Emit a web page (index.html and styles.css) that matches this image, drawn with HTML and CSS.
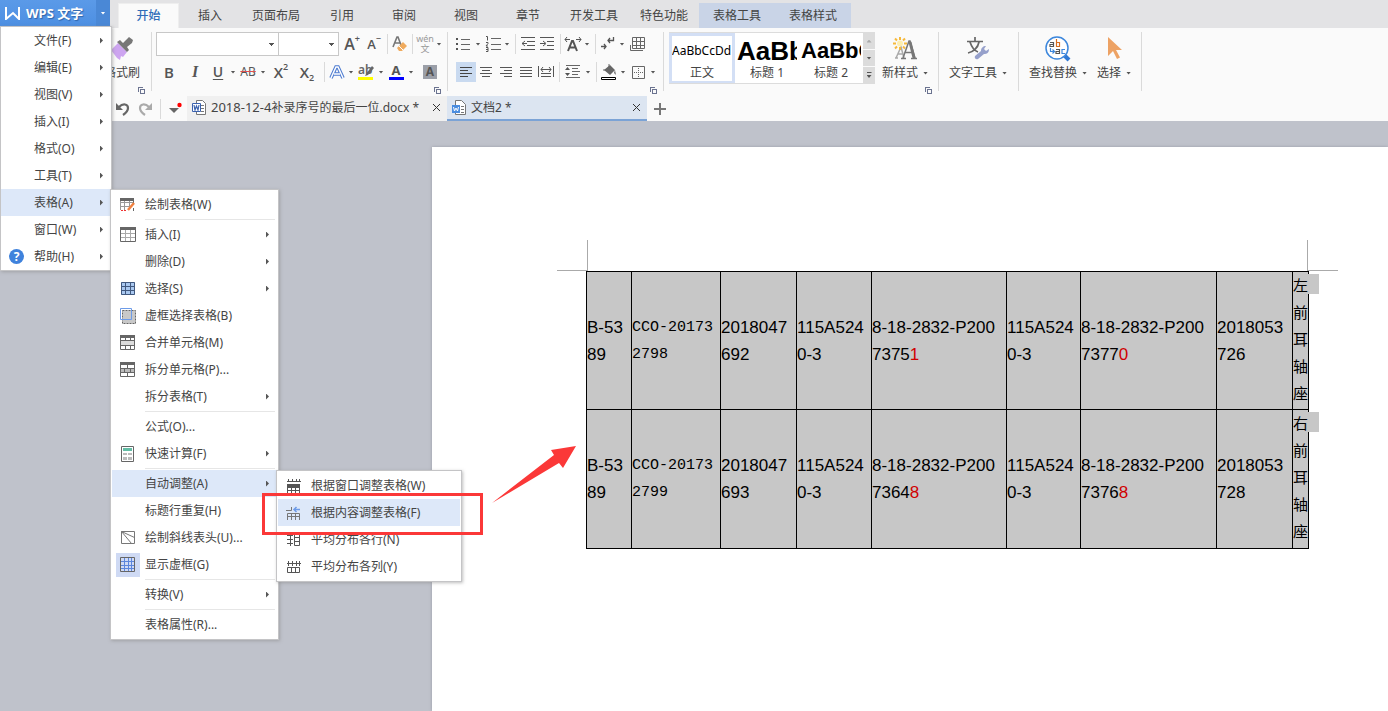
FILE: index.html
```html
<!DOCTYPE html>
<html lang="zh-CN">
<head>
<meta charset="utf-8">
<title>WPS 文字</title>
<link rel="stylesheet" href="styles.css">
</head>
<body>
<header class="titlebar">
  <div class="app">
    <button class="app-name"><svg width="16" height="14" viewBox="0 0 16 14"><path d="M1 1v12l7-6 6 6V1" fill="none" stroke="#fff" stroke-width="2"/></svg>WPS 文字</button>
    <button class="app-drop" aria-label="菜单"><i class="caret white"></i></button>
  </div>
  <nav class="tabs">
    <button class="tab active">开始</button>
    <button class="tab">插入</button>
    <button class="tab wide">页面布局</button>
    <button class="tab">引用</button>
    <button class="tab">审阅</button>
    <button class="tab">视图</button>
    <button class="tab">章节</button>
    <button class="tab wide">开发工具</button>
    <button class="tab wide">特色功能</button>
    <button class="tab context">表格工具</button>
    <button class="tab context">表格样式</button>
  </nav>
</header>

<section class="ribbon">
  <div class="group painter">
    <button class="big"><svg width="24" height="26" viewBox="0 0 24 26"><path d="M1 14l7-7 9 9-4 5-2-1-1 4-3-2z" fill="#cda5f0"/><path d="M7 6l3-2 3 3 6-6 4 3-1 3-5 4 2 3-2 2z" fill="#777"/></svg><span>格式刷</span></button>
    <i class="launcher"></i>
  </div>

  <div class="group font">
    <div class="row">
      <select class="font-name" aria-label="字体"><option></option></select>
      <select class="font-size" aria-label="字号"><option></option></select>
      <button class="tool w26 glyph">A<sup>+</sup></button>
      <button class="tool w18 glyph small">A<sup>−</sup></button>
      <i class="sep"></i>
      <button class="tool w16" aria-label="清除格式"><svg width="16" height="18" viewBox="0 0 16 18"><path d="M1 12L5 2h1l3 8M3 8h5" fill="none" stroke="#777" stroke-width="1.6"/><path d="M5 13l6-6 4 4-5 5H7z" fill="#f0ab5e"/><path d="M7 11l4 4" stroke="#fff"/></svg></button>
      <i class="sep"></i>
      <button class="tool w16 pinyin"><span>wén</span><span>文</span></button>
      <button class="tool w12" aria-label="更多"><i class="caret"></i></button>
    </div>
    <div class="row">
      <button class="tool w26 glyph mid">B</button>
      <button class="tool w26 glyph italic">I</button>
      <button class="tool w20 glyph under">U</button>
      <button class="tool w10" aria-label="下划线样式"><i class="caret"></i></button>
      <button class="tool w20 strike">AB</button>
      <button class="tool w10" aria-label="删除线样式"><i class="caret"></i></button>
      <button class="tool w26 glyph mid">X<sup>2</sup></button>
      <button class="tool w26 glyph mid">X<sub>2</sub></button>
      <i class="sep"></i>
      <button class="tool w16" aria-label="文字效果"><svg width="16" height="16" viewBox="0 0 16 16"><path d="M2 14L7 3h2l5 11M5 10h6" fill="none" stroke="#4d7bd0" stroke-width="3.600"/><path d="M2 14L7 3h2l5 11M5 10h6" fill="none" stroke="#fff" stroke-width="1.500"/></svg></button>
      <button class="tool w12" aria-label="更多效果"><i class="caret"></i></button>
      <button class="tool w18" aria-label="突出显示"><svg width="16" height="17" viewBox="0 0 16 17"><text x="0" y="10" font-size="12" class="ab">ab</text><path d="M8 10l6-8 2 2-6 7-3 1z" fill="#666"/><path d="M0 13h15v3H0z" fill="#ff0"/></svg></button>
      <button class="tool w12" aria-label="突出显示颜色"><i class="caret"></i></button>
      <button class="tool w18 mark">A</button>
      <button class="tool w12" aria-label="字体颜色"><i class="caret"></i></button>
      <button class="tool w26"><span class="shade">A</span></button>
    </div>
    <i class="launcher"></i>
  </div>

  <div class="group para">
    <div class="row">
      <button class="tool w18" aria-label="项目符号"><svg width="16" height="16" viewBox="0 0 16 16"><path d="M1 2h2v2H1zM1 7h2v2H1zM1 12h2v2H1z" fill="#555"/><path d="M6 3.500h9M6 8.500h9M6 13.500h9" stroke="#666"/></svg></button>
      <button class="tool w12" aria-label="更多符号"><i class="caret"></i></button>
      <button class="tool w18" aria-label="编号"><svg width="16" height="18" viewBox="0 0 16 18"><path d="M1 1.500h1.500v4M1 7.500h2v1l-2 2.500h2M1 12.500h2v4H1M1 14.500h2" fill="none" stroke="#555"/><path d="M6 3.500h10M6 9.500h10M6 14.500h10" stroke="#666"/></svg></button>
      <button class="tool w10" aria-label="更多编号"><i class="caret"></i></button>
      <i class="sep thin"></i>
      <button class="tool w18" aria-label="减少缩进"><svg width="14" height="14" viewBox="0 0 14 14"><path d="M0 .5h14M6 4.500h8M6 8.500h8M0 12.500h14M1 6.500h5M4 4L1 6.500 4 9" fill="none" stroke="#555"/></svg></button>
      <button class="tool w20" aria-label="增加缩进"><svg width="14" height="14" viewBox="0 0 14 14"><path d="M0 .5h14M7 4.500h7M7 8.500h7M0 12.500h14M0 6.500h5M3 4l3 2.500L3 9" fill="none" stroke="#555"/></svg></button>
      <i class="sep thin"></i>
      <button class="tool w18" aria-label="字符缩放"><svg width="18" height="16" viewBox="0 0 18 16"><path d="M4 15l4-10h1l4 10M6 11.500h6" fill="none" stroke="#555" stroke-width="2"/><path d="M1 3.500h5M3 1L1 3.500 3 6M12 3.500h5M15 1l2 2.500L15 6" fill="none" stroke="#555"/></svg></button>
      <button class="tool w10" aria-label="更多版式"><i class="caret"></i></button>
      <i class="sep thin"></i>
      <button class="tool w18" aria-label="换行"><svg width="14" height="14" viewBox="0 0 14 14"><path d="M12.500 0v3.500H7M9 1L7 3.500 9 6M0 9.500h5M3 7l2 2.500L3 12" fill="none" stroke="#555" stroke-width="1.300"/></svg></button>
      <button class="tool w10" aria-label="更多换行"><i class="caret"></i></button>
      <button class="tool w20" aria-label="插入表格"><svg width="15" height="15" viewBox="0 0 15 15"><path d="M2.500.5h12v11h-12zM2.500 4.500h12M2.500 8.500h12M6.500 0v12M10.500 0v12M.5 8v5.500H13" fill="none" stroke="#666"/></svg></button>
    </div>
    <div class="row second">
      <button class="tool w20 on" aria-label="左对齐"><svg width="12" height="12" viewBox="0 0 12 12"><path d="M0 1.500h12M0 4.500h8M0 7.500h12M0 10.500h8" stroke="#444"/></svg></button>
      <button class="tool w20" aria-label="居中"><svg width="12" height="12" viewBox="0 0 12 12"><path d="M0 1.500h12M2 4.500h8M0 7.500h12M2 10.500h8" stroke="#555"/></svg></button>
      <button class="tool w20" aria-label="右对齐"><svg width="12" height="12" viewBox="0 0 12 12"><path d="M0 1.500h12M4 4.500h8M0 7.500h12M4 10.500h8" stroke="#555"/></svg></button>
      <button class="tool w20" aria-label="两端对齐"><svg width="12" height="12" viewBox="0 0 12 12"><path d="M0 1.500h12M0 4.500h12M0 7.500h12M0 10.500h12" stroke="#555"/></svg></button>
      <button class="tool w20" aria-label="分散对齐"><svg width="16" height="14" viewBox="0 0 16 14"><path d="M.5 1v11M15.500 1v11M3 4.500h10M5 2L3 4.500 5 7M11 2l2 2.500L11 7M3 8.500h10M3 11.500h10" fill="none" stroke="#555"/></svg></button>
      <i class="sep thin"></i>
      <button class="tool w20" aria-label="行距"><svg width="16" height="14" viewBox="0 0 16 14"><path d="M1 .5h14M7 3.500h6M7 6.500h8M7 9.500h6M1 12.500h14" stroke="#666"/><path d="M0 5l2.500-3L5 5zM0 8h5l-2.500 3z" fill="#555"/></svg></button>
      <button class="tool w10" aria-label="更多行距"><i class="caret"></i></button>
      <i class="sep thin"></i>
      <button class="tool w18" aria-label="底纹颜色"><svg width="16" height="16" viewBox="0 0 16 16"><path d="M3 6l6-5 5 5-5 5zM14 6l1 5-2-2z" fill="#666"/><path d="M2 6h11M8 0v4" stroke="#666"/><path d="M.5 13.500h14v2H.5z" fill="#fff" stroke="#000"/></svg></button>
      <button class="tool w10" aria-label="更多底纹"><i class="caret"></i></button>
      <button class="tool w20" aria-label="边框"><svg width="13" height="13" viewBox="0 0 13 13"><path d="M.5.5h12v12H.5z" fill="none" stroke="#666"/><path d="M6.500 2v9M2 6.500h9" stroke="#666" stroke-dasharray="1 1"/></svg></button>
      <button class="tool w10" aria-label="更多边框"><i class="caret"></i></button>
    </div>
    <i class="launcher"></i>
  </div>

  <div class="group styles">
    <div class="gallery">
      <button class="style chosen"><span class="sample">AaBbCcDd</span><span>正文</span></button>
      <button class="style"><span class="sample h1">AaBb</span><span>标题 1</span></button>
      <button class="style"><span class="sample h2">AaBbC</span><span>标题 2</span></button>
      <div class="scroll">
        <button aria-label="上"><i class="caret up"></i></button>
        <button aria-label="下"><i class="caret"></i></button>
        <button aria-label="更多"><i class="caret bar"></i></button>
      </div>
    </div>
    <button class="big"><svg width="26" height="26" viewBox="0 0 26 26"><path d="M4 22l5-11 3 11M3 22h3M6 18h5" fill="none" stroke="#aaa" stroke-width="1.500"/><path d="M11 22l6-17h1l5 17M9 22.500h5M13 16.500h7M19 22.500h6" fill="none" stroke="#777" stroke-width="1.500"/><path d="M18 6l4 16" stroke="#777" stroke-width="3"/><g stroke="#f6b93b" stroke-width="2"><path d="M8 1v3M8 11v3M1 7.500h3M12 7.500h3M3 2.500l2 2M11 10.500l2 2M13 2.500l-2 2M5 10.500l-2 2"/></g><circle cx="8" cy="7.500" r="3" fill="#fdeeb0"/></svg><span>新样式<i class="caret"></i></span></button>
    <i class="launcher"></i>
  </div>

  <div class="group texttools">
    <button class="big"><svg width="24" height="26" viewBox="0 0 24 26"><path d="M1 5.500h16M9 1v4M4 6c2 6 5 9 8 10M13 6c-1 6-6 10-11 11" fill="none" stroke="#666" stroke-width="1.700"/><path d="M9 20l6-5c0-3 2-5 5-5l-2 3 2 2 3-2c0 4-2 5-5 5l-6 5c-2 1-4-1-3-3z" fill="#96a0cb"/></svg><span>文字工具<i class="caret"></i></span></button>
  </div>

  <div class="group find">
    <button class="big"><svg width="26" height="26" viewBox="0 0 26 26"><circle cx="12" cy="12" r="11" fill="#fff" stroke="#3d87dc" stroke-width="1.500"/><path d="M20 20l4 4" stroke="#3079d4" stroke-width="4"/><g fill="none" stroke-width="1.200"><path d="M5 6.500h3.500v4H5v-2h3" stroke="#555"/><path d="M11.500 3v7.500h3v-4h-3" stroke="#d66d21"/><path d="M11 13.500h3.500v4H11v-2h3" stroke="#555"/><path d="M20 13.500h-3v4h3M5.500 12v3.500H9M7.500 13.500l2 2-2 2" stroke="#3d87dc"/></g></svg><span>查找替换<i class="caret"></i></span></button>
    <button class="big"><svg width="18" height="26" viewBox="0 0 18 26"><path d="M3 1v19l5-5 4 8 3-1.500-4-7.500h6z" fill="#eda264"/></svg><span>选择<i class="caret"></i></span></button>
  </div>
</section>

<section class="docbar">
  <button class="quick" aria-label="撤销"><svg width="14" height="14" viewBox="0 0 14 14"><path d="M3 5c4-4 9-3 9 1 0 3-2 5-5 7" fill="none" stroke="#666" stroke-width="2.200"/><path d="M0 1v7h7z" fill="#666"/></svg></button>
  <button class="quick" aria-label="恢复"><svg width="14" height="14" viewBox="0 0 14 14"><path d="M11 5C7 1 2 2 2 6c0 3 2 5 5 7" fill="none" stroke="#aaa" stroke-width="2.200"/><path d="M14 1v7H7z" fill="#aaa"/></svg></button>
  <i class="sep"></i>
  <button class="quick" aria-label="自定义快速访问"><svg width="16" height="14" viewBox="0 0 16 14"><path d="M1 6h10l-5 5z" fill="#666"/><circle cx="11.500" cy="3" r="2.200" fill="#f00"/></svg></button>
  <div class="doc">
    <svg width="14" height="15" viewBox="0 0 14 15"><path d="M4.500.5h6l3 3v11h-9z" fill="#fff" stroke="#777"/><path d="M9 5.500h3M9 8.500h3M9 11.500h3" stroke="#777"/><path d="M.5 3.500h8v8h-8z" fill="#fff" stroke="#3b62ae"/><path d="M2 5l1 5 1.500-4L6 10l1-5" fill="none" stroke="#3b62ae" stroke-width="1.200"/></svg>
    <span class="doc-name"><span class="latin">2018-12-4</span>补录序号的最后一位.docx *</span>
    <button class="close" aria-label="关闭"><svg width="9" height="9" viewBox="0 0 9 9"><path d="M1 1l7 7M8 1L1 8" stroke="#333"/></svg></button>
  </div>
  <div class="doc current">
    <svg width="14" height="15" viewBox="0 0 14 15"><path d="M3.500.5h6l4 4v10h-10z" fill="#fff" stroke="#777"/><path d="M9 6.500h3M9 9.500h3M9 12.500h3" stroke="#777"/><path d="M0 5h8v8H0z" fill="#4a8de0"/><path d="M1.500 7l1 4L4 8l1.500 3 1-4" fill="none" stroke="#fff"/></svg>
    <span class="doc-name">文档2 *</span>
    <button class="close" aria-label="关闭"><svg width="9" height="9" viewBox="0 0 9 9"><path d="M1 1l7 7M8 1L1 8" stroke="#333"/></svg></button>
  </div>
  <button class="plus" aria-label="新建"><svg width="12" height="12" viewBox="0 0 12 12"><path d="M6 0v12M0 6h12" stroke="#777" stroke-width="2"/></svg></button>
</section>

<main class="workspace">
  <article class="page">
    <div class="sheet">
      <div class="corners"><i class="corner left"></i><i class="corner right"></i></div>
      <table class="grid">
        <colgroup><col class="c45"><col class="c89"><col class="c76"><col class="c75"><col class="c135"><col class="c74"><col class="c136"><col class="c76"><col class="c16"></colgroup>
        <tbody>
          <tr><td>B-53<br>89</td><td class="mono">CCO-20173<br>2798</td><td>2018047<br>692</td><td>115A524<br>0-3</td><td>8-18-2832-P200<br>7375<em>1</em></td><td>115A524<br>0-3</td><td>8-18-2832-P200<br>7377<em>0</em></td><td>2018053<br>726</td><td class="han">左<br>前<br>耳<br>轴<br>座</td></tr>
          <tr><td>B-53<br>89</td><td class="mono">CCO-20173<br>2799</td><td>2018047<br>693</td><td>115A524<br>0-3</td><td>8-18-2832-P200<br>7364<em>8</em></td><td>115A524<br>0-3</td><td>8-18-2832-P200<br>7376<em>8</em></td><td>2018053<br>728</td><td class="han">右<br>前<br>耳<br>轴<br>座</td></tr>
        </tbody>
      </table>
    </div>
  </article>
</main>

<ul class="menu main-menu">
  <li><button><i class="ico"></i>文件(F)<i class="arrow"></i></button></li>
  <li><button><i class="ico"></i>编辑(E)<i class="arrow"></i></button></li>
  <li><button><i class="ico"></i>视图(V)<i class="arrow"></i></button></li>
  <li><button><i class="ico"></i>插入(I)<i class="arrow"></i></button></li>
  <li><button><i class="ico"></i>格式(O)<i class="arrow"></i></button></li>
  <li><button><i class="ico"></i>工具(T)<i class="arrow"></i></button></li>
  <li><button class="hot"><i class="ico"></i>表格(A)<i class="arrow"></i></button></li>
  <li><button><i class="ico"></i>窗口(W)<i class="arrow"></i></button></li>
  <li><button><i class="ico"><b class="help">?</b></i>帮助(H)<i class="arrow"></i></button></li>
</ul>

<ul class="menu table-menu">
  <li><button><i class="ico"><svg width="16" height="14" viewBox="0 0 16 14"><path d="M.5 1v11M0 4.500h14M4.500 3v9M9.500 3v7M0 8.500h10" stroke="#999"/><path d="M0 0h14v3H0z" fill="#666"/><path d="M1 12.500h6" stroke="#e33" stroke-dasharray="2 1"/><path d="M13.500 2v3M13.500 10v3" stroke="#666"/><path d="M8 12l6-7" stroke="#f08040" stroke-width="2.500"/></svg></i>绘制表格(W)</button></li>
  <li class="line"></li>
  <li><button><i class="ico"><svg width="16" height="15" viewBox="0 0 16 15"><path d="M0 6.500h16M0 10.500h16M5.500 3v12M10.500 3v12" stroke="#aaa"/><path d="M.5.5h15v14H.5z" fill="none" stroke="#666"/><path d="M0 0h16v3H0z" fill="#666"/></svg></i>插入(I)<i class="arrow"></i></button></li>
  <li><button><i class="ico"></i>删除(D)<i class="arrow"></i></button></li>
  <li><button><i class="ico"><svg width="14" height="13" viewBox="0 0 14 13"><path d="M0 0h14v13H0z" fill="#a9c8f0"/><path d="M.5.5h13v12H.5zM0 4.500h14M0 8.500h14M4.500 0v13M9.500 0v13" fill="none" stroke="#41597f"/></svg></i>选择(S)<i class="arrow"></i></button></li>
  <li><button><i class="ico"><svg width="16" height="16" viewBox="0 0 16 16"><path d="M2.500 2.500h13v13h-13z" fill="#c8c8c8" stroke="#666" stroke-dasharray="2 1"/><path d="M.5.5h11v11H.5z" fill="none" stroke="#6d9be8"/></svg></i>虚框选择表格(B)</button></li>
  <li><button><i class="ico"><svg width="15" height="15" viewBox="0 0 15 15"><path d="M1 6h13v4H1z" fill="#ddd"/><path d="M.5.5h14v14H.5zM0 5.500h15M0 10.500h15M5.500 2v4M10.500 2v4M5.500 10v5M10.500 10v5" fill="none" stroke="#666"/><path d="M0 0h15v3H0z" fill="#666"/></svg></i>合并单元格(M)</button></li>
  <li><button><i class="ico"><svg width="15" height="15" viewBox="0 0 15 15"><path d="M1 6h13v4H1z" fill="#bbb"/><path d="M.5.5h14v14H.5zM0 6.500h15M0 10.500h15M7.500 3v3M4.500 6v4M10.500 6v4M7.500 10v5" fill="none" stroke="#666"/><path d="M0 0h15v3H0z" fill="#666"/></svg></i>拆分单元格(P)...</button></li>
  <li><button><i class="ico"></i>拆分表格(T)<i class="arrow"></i></button></li>
  <li class="line"></li>
  <li><button><i class="ico"></i>公式(O)...</button></li>
  <li><button><i class="ico"><svg width="13" height="16" viewBox="0 0 13 16"><path d="M.5.5h12v15H.5z" fill="#fff" stroke="#666"/><path d="M2 2h9v3H2z" fill="#63bda5"/><path d="M2 7h4v2H2zM7 7h4v2H7zM2 11h4v3H2zM7 11h4v3H7z" fill="#bbb"/></svg></i>快速计算(F)<i class="arrow"></i></button></li>
  <li class="line"></li>
  <li><button class="hot"><i class="ico"></i>自动调整(A)<i class="arrow"></i></button></li>
  <li><button><i class="ico"></i>标题行重复(H)</button></li>
  <li><button><i class="ico"><svg width="14" height="13" viewBox="0 0 14 13"><path d="M.5.500h13v12H.5zM.5.500l13 6M.5.500l10 12" fill="none" stroke="#777"/></svg></i>绘制斜线表头(U)...</button></li>
  <li><button><i class="ico"><b class="pressed"><svg width="15" height="15" viewBox="0 0 15 15"><path d="M4.500 1v13M8.500 1v13M11.500 1v13M1 4.500h13M1 8.500h13M1 11.500h13" stroke="#5c86dc"/><path d="M.5.5h14v14H.5z" fill="none" stroke="#666"/></svg></b></i>显示虚框(G)</button></li>
  <li class="line"></li>
  <li><button><i class="ico"></i>转换(V)<i class="arrow"></i></button></li>
  <li class="line"></li>
  <li><button><i class="ico"></i>表格属性(R)...</button></li>
</ul>

<ul class="menu fit-menu">
  <li><button><i class="ico"><svg width="14" height="16" viewBox="0 0 14 16"><path d="M0 3.500h14M1.500 1v2M5.500 1v2M9.500 1v2M12.500 1v2M.5 10v6M4.500 10v6M8.500 10v6M12.500 10v6M0 12.500h13" stroke="#555"/><path d="M0 6h13v4H0z" fill="#555"/></svg></i>根据窗口调整表格(W)</button></li>
  <li><button class="hot"><i class="ico"><svg width="15" height="14" viewBox="0 0 15 14"><path d="M0 4.500h5.500V1M1.500 14V7.500h12V14M1.500 10.500h12M5.500 7v7M9.500 7v7" fill="none" stroke="#777"/><path d="M8 3.500h6M10.500 1L8 3.500 10.500 6" fill="none" stroke="#6d9be8" stroke-width="1.500"/></svg></i>根据内容调整表格(F)</button></li>
  <li><button><i class="ico"><svg width="14" height="13" viewBox="0 0 14 13"><path d="M3.500 0v13M0 2.500h6M0 6.500h6M0 10.500h6M7.500.5h5v12h-5zM7 4.500h6M7 8.500h6" fill="none" stroke="#555"/></svg></i>平均分布各行(N)</button></li>
  <li><button><i class="ico"><svg width="14" height="13" viewBox="0 0 14 13"><path d="M0 3.500h14M1.500 1v5M5.500 1v5M9.500 1v5M12.500 1v5M.5 7.500h12v5H.5zM4.500 7v6M8.500 7v6" fill="none" stroke="#555"/></svg></i>平均分布各列(Y)</button></li>
</ul>

<div class="callout"></div>
<svg class="pointer" width="86" height="60" viewBox="0 0 86 60"><path d="M84 1L59 5l3 5L0 58l67-40 4 5z" fill="#fb3838"/></svg>
</body>
</html>
```

FILE: styles.css
```css
* { box-sizing: border-box; }

body {
  margin: 0;
  min-height: 100vh;
  display: flex;
  flex-direction: column;
  position: relative;
  overflow: hidden;
  background: #bfc2cb;
  color: #444;
  font: 12px/16px "Noto Sans", "Noto Sans CJK SC", sans-serif;
}

button {
  margin: 0;
  padding: 0;
  border: 0;
  background: none;
  color: inherit;
  font: inherit;
  white-space: nowrap;
}

svg { display: block; flex: none; }
i { font-style: normal; }

.caret {
  display: block;
  flex: none;
  width: 5px;
  height: 3px;
  background: #555;
  clip-path: polygon(0 0, 100% 0, 50% 100%);
}
.caret.white { background: #fff; }
.caret.up { background: #aaa; clip-path: polygon(0 100%, 100% 100%, 50% 0); }
.caret.bar { height: 6px; clip-path: polygon(0 0, 100% 0, 100% 17%, 0 17%, 0 50%, 100% 50%, 50% 100%, 0 50%); }

/* title bar */
.titlebar { display: flex; height: 28px; background: #e3e3e5; }
.app { display: flex; height: 26px; width: 110px; color: #fff; background: linear-gradient(#5b9ae8, #4d8fe2); }
.app-name {
  flex: 1;
  display: flex;
  align-items: center;
  gap: 5px;
  padding-left: 5px;
  font-size: 13px;
  font-weight: 700;
  text-shadow: 1px 1px 1px #2f65ab;
}
.app-drop { width: 14px; display: flex; align-items: center; justify-content: center; background: #4a88d6; }
.tabs { display: flex; padding: 3px 0 0 8px; }
.tab { width: 62px; height: 25px; }
.tab.active { width: 61px; background: #fafafa; color: #2f6cb8; font-weight: 500; border: 1px solid #eee; border-bottom: 0; }
.tab.wide { width: 70px; }
.tab.context { width: 76px; background: #c9d4e7; }

/* ribbon */
.ribbon { display: flex; height: 68px; padding: 4px 0; background: #fafafa; }
.group { position: relative; display: flex; height: 59px; border-right: 1px solid #dadada; }
.launcher {
  position: absolute;
  right: 8px;
  bottom: -1px;
  width: 5px;
  height: 5px;
  border: solid #6b7390;
  border-width: 1px 0 0 1px;
}
.launcher::after { content: ""; position: absolute; left: 1px; top: 1px; width: 3px; height: 3px; border: 1px solid #6b7390; }
.painter { padding: 0 11px 0 104px; }
.font { flex-direction: column; gap: 4px; padding-left: 4px; width: 296px; }
.para { flex-direction: column; gap: 4px; padding-left: 6px; width: 216px; }
.row { display: flex; align-items: center; height: 24px; }
.row.second { padding-left: 2px; }
.sep { flex: none; width: 9px; height: 20px; background: linear-gradient(#dadada, #dadada) center / 1px 100% no-repeat; }
.sep.thin { width: 7px; }

.font-name, .font-size {
  appearance: none;
  height: 24px;
  margin: 0;
  border: 1px solid #c8c8c8;
  border-radius: 0;
  background: #fff conic-gradient(from -45deg at 50% 100%, #555 90deg, transparent 0) right 4px center / 5px 3px no-repeat;
}
.font-name { width: 123px; }
.font-size { width: 61px; margin-left: -1px; }

.tool { flex: none; display: flex; align-items: center; justify-content: center; height: 20px; color: #555; }
.w10 { width: 10px; }
.w12 { width: 12px; }
.w16 { width: 16px; }
.w18 { width: 18px; }
.w20 { width: 20px; }
.w26 { width: 26px; }
.on { background: #c9daf0; }
.glyph { font-size: 16px; font-weight: 600; font-family: "Open Sans", sans-serif; }
.glyph.mid { font-size: 15px; }
.glyph.small { font-size: 13px; }
.glyph sup, .glyph sub { font-size: 9px; line-height: 9px; }
.glyph sup { align-self: flex-start; }
.glyph sub { align-self: flex-end; }
.italic { font-family: "Liberation Serif", serif; font-style: italic; }
.under { font-size: 14px; text-decoration: underline; text-underline-offset: 2px; }
.strike { font-size: 12px; text-decoration: line-through #e05050; }
.pinyin { flex-direction: column; font-size: 9px; line-height: 10px; color: #999; }
.ab { font-family: "Noto Sans", sans-serif; font-weight: 600; fill: #666; }
.mark {
  height: 16px;
  padding-bottom: 3px;
  font-weight: 700;
  font-size: 13px;
  line-height: 13px;
  background: linear-gradient(#00f, #00f) center bottom / 15px 3px no-repeat;
}
.shade { width: 14px; height: 14px; line-height: 14px; background: #9b9fa8; font-weight: 700; text-align: center; }

.big { display: flex; flex-direction: column; align-items: center; gap: 3px; padding-top: 4px; height: 52px; }
.big span { display: flex; align-items: center; gap: 5px; }

.styles { padding: 0 10px 0 5px; gap: 7px; }
.gallery { display: flex; height: 52px; background: #fff; border: 1px solid #dcdcdc; border-width: 1px 0; }
.style {
  display: flex;
  flex-direction: column;
  align-items: center;
  justify-content: space-between;
  width: 64px;
  overflow: hidden;
  padding: 3px 2px 2px;
}
.style.chosen { width: 66px; border: 3px solid #d3dff5; border-bottom-width: 2px; padding: 0; }
.sample { width: 100%; height: 28px; line-height: 30px; color: #000; text-align: left; overflow: hidden; }
.h1, .h2 { font-family: "Liberation Sans", sans-serif; font-weight: 700; }
.h1 { font-size: 26px; }
.h2 { font-size: 22px; }
.scroll { display: grid; grid-template-rows: repeat(3, 1fr); gap: 1px; width: 12px; background: #fafafa; }
.scroll button { display: flex; align-items: center; justify-content: center; background: #dcdcdc; }
.texttools { padding: 0 11px 0 10px; }
.find { padding: 0 10px; gap: 10px; }

/* document tabs */
.docbar { display: flex; align-items: center; height: 25px; padding-left: 112px; background: #fafafa; }
.quick { width: 22px; height: 22px; display: flex; align-items: center; justify-content: center; }
.doc { display: flex; align-items: center; height: 25px; width: 260px; padding: 0 6px 0 5px; gap: 5px; background: #f0f0f0; border-bottom: 2px solid #f0f0f0; }
.doc.current { width: 200px; background: #dce5f1; border-color: #7ba3d6; }
.doc-name { flex: 1; white-space: nowrap; }
.latin { font-size: 13px; }
.plus { padding: 0 7px; }

/* page */
.workspace { flex: 1; display: flex; padding: 26px 0 0 432px; }
.page { flex: 1; padding: 93px 0 0 125px; background: #fff; box-shadow: 0 0 3px #999ca6; }
.sheet { width: 781px; }
.corners { display: flex; justify-content: space-between; }
.corner { width: 31px; height: 31px; border: solid #aaa; border-width: 0 0 1px; }
.corner.left { border-right-width: 1px; }
.corner.right { border-left-width: 1px; }
.grid {
  margin-left: 29px;
  width: 723px;
  table-layout: fixed;
  border-collapse: collapse;
  background: #c7c7c7;
  color: #000;
  font: 17px/27px "Liberation Sans", "Noto Sans CJK SC", sans-serif;
}
.grid tr { height: 139px; }
.grid tr:first-child { height: 138px; }
.grid td { position: relative; padding: 0; border: 1px solid #000; vertical-align: middle; white-space: nowrap; }
.grid em { font-style: normal; color: #d00000; }
.grid .mono { font-family: "Liberation Mono", monospace; font-size: 15px; }
.grid .han { font-size: 15px; vertical-align: top; }
.han::after { content: ""; position: absolute; left: 100%; top: 2px; width: 11px; height: 20px; background: #c7c7c7; }
.c16 { width: 16px; }
.c45 { width: 45px; }
.c74 { width: 74px; }
.c75 { width: 75px; }
.c76 { width: 76px; }
.c89 { width: 89px; }
.c135 { width: 135px; }
.c136 { width: 136px; }

/* menus */
.menu {
  position: absolute;
  margin: 0;
  padding: 1px;
  list-style: none;
  background: #fff;
  border: 1px solid #c4c4c6;
  box-shadow: 1px 1px 3px #8888;
}
.menu button { display: flex; align-items: center; width: 100%; height: 27px; text-align: left; }
.menu .hot { background: #dde8f9; }
.ico { display: flex; align-items: center; justify-content: center; flex: none; width: 31px; margin-right: 2px; }
.arrow { margin-left: auto; margin-right: 8px; width: 3px; height: 6px; background: #555; clip-path: polygon(0 0, 100% 50%, 0 100%); }
.line { height: 3px; margin: 0 2px 0 33px; background: linear-gradient(#e6e6e6, #e6e6e6) center / 100% 1px no-repeat; }
.main-menu { left: 0; top: 26px; width: 112px; padding: 0; }
.table-menu { left: 110px; top: 189px; width: 169px; }
.fit-menu { left: 276px; top: 470px; width: 186px; }
.help { width: 15px; height: 15px; border-radius: 50%; background: #3f82dc; color: #fff; line-height: 15px; text-align: center; }
.pressed { display: flex; align-items: center; justify-content: center; width: 24px; height: 24px; background: #cfdaf4; }

/* annotation over the menus */
.callout { position: absolute; left: 262px; top: 493px; width: 221px; height: 42px; border: 3px solid #fb3838; }
.pointer { position: absolute; left: 492px; top: 445px; }
```
